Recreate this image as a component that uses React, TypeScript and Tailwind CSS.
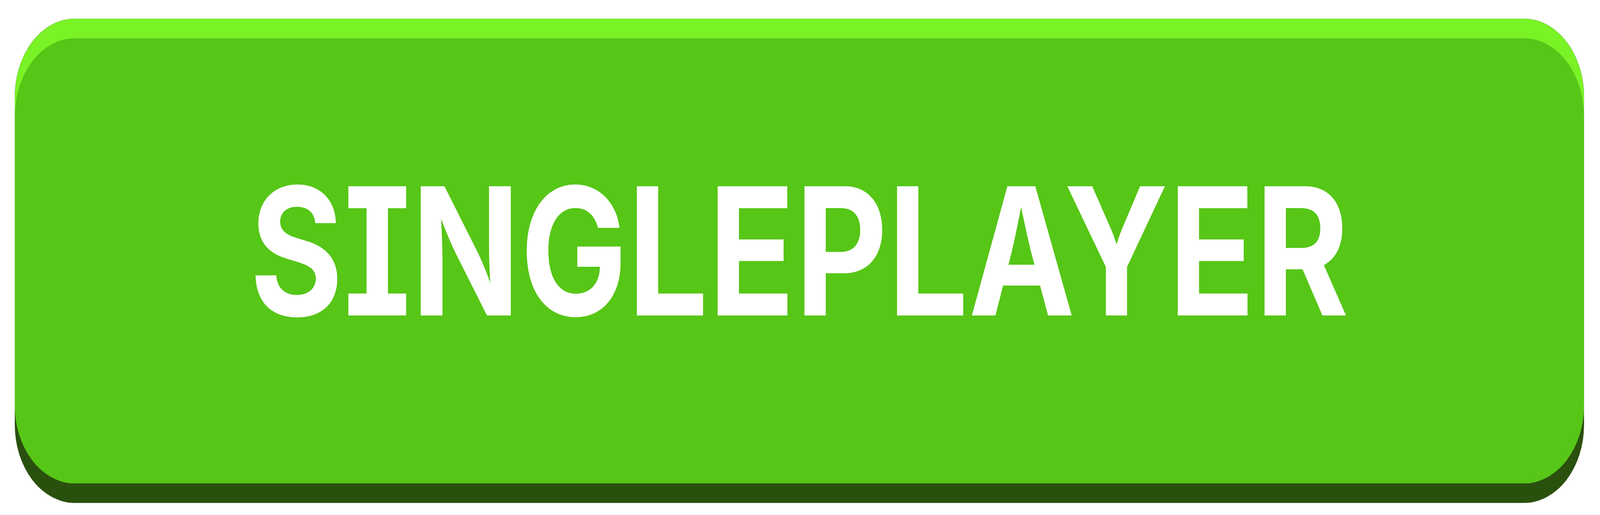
export default function App() {
  return (
    <div className="w-full h-[1319px] bg-white pl-[38px] pr-[41px] pt-[48px]">
      {/* dark base layer shows as the bottom lip */}
      <div
        role="button"
        className="w-full rounded-[154px/200px] bg-[#2a500e] pb-[50px] shadow-[0_0_2px_rgba(0,0,0,0.35)] cursor-pointer select-none"
      >
        {/* light layer shows as the top highlight */}
        <div className="rounded-[154px/200px] bg-[#79f226] pt-[50px]">
          <div className="h-[1140px] rounded-[154px/200px] bg-[#56c617] flex justify-center pt-[317px]">
            <span className="inline-block h-[455px] origin-center scale-x-[0.804] font-['Inter',sans-serif] font-bold text-[455px] leading-none text-white [font-feature-settings:'cv08']">
              SINGLEPLAYER
            </span>
          </div>
        </div>
      </div>
    </div>
  );
}
